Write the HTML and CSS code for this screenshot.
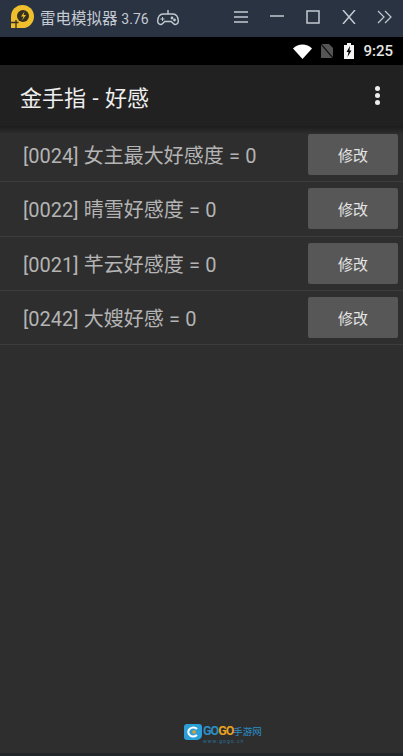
FILE: index.html
```html
<!DOCTYPE html>
<html lang="zh-CN">
<head>
  <meta charset="UTF-8" />
  <meta name="viewport" content="width=device-width, initial-scale=1.0"/>
  <title>金手指 - 好感</title>
  <link rel="stylesheet" href="styles.css">
</head>
<body>

<div class="titlebar">
  <svg class="logo" width="23" height="24" viewBox="0 0 23 24">
    <path d="M0 23V11.500A11.500 11.500 0 1 1 11.500 23z" fill="#f0bf2e"/>
    <circle cx="12" cy="11" r="6" fill="#35301f"/>
    <path d="M13.500 6.500l-3.500 5h2.500l-1.500 4 4-5.500h-2.500z" fill="#f0bf2e"/>
    <path d="M0 17.500h7.500M5 15v9" stroke="#35301f" stroke-width="1.300" fill="none"/>
  </svg>
  <span class="app-name">雷电模拟器 <span class="version">3.76</span></span>
  <svg class="pad" width="22" height="17" viewBox="0 0 22 17" fill="none" stroke="#c4cad2" stroke-width="1.400">
    <path d="M6 5h10c3 0 5 3 5.300 7 .2 3-3 4.500-5 2.500l-2-2H7.700l-2 2c-2 2-5.200.5-5-2.500C1 8 3 5 6 5z"/>
    <path d="M11 5V1"/>
    <path d="M3.500 10h4M5.500 8v4" stroke-width="1"/>
    <circle cx="15" cy="9" r=".7"/><circle cx="17.500" cy="11" r=".7"/>
  </svg>
  <div class="win-btns">
    <svg width="16" height="14" viewBox="0 0 16 14" stroke="#c4cad2" stroke-width="1.500"><path d="M1 2h14M1 7h14M1 12h14"/></svg>
    <svg width="16" height="14" viewBox="0 0 16 14" stroke="#c4cad2" stroke-width="1.500"><path d="M1 6h14"/></svg>
    <svg width="16" height="14" viewBox="0 0 16 14" fill="none" stroke="#c4cad2" stroke-width="1.500"><path d="M2 1h12v12H2z"/></svg>
    <svg width="16" height="14" viewBox="0 0 16 14" stroke="#c4cad2" stroke-width="1.500"><path d="M2 0l12 14M14 0L2 14"/></svg>
    <svg width="16" height="14" viewBox="0 0 16 14" fill="none" stroke="#c4cad2" stroke-width="1.200"><path d="M1 1l6 6-6 6M8 1l6 6-6 6"/></svg>
  </div>
</div>

<div class="statusbar">
  <svg width="19" height="15" viewBox="0 0 19 15"><path d="M0 4.500c5-5.500 14-5.500 19 0l-9.500 10.500z" fill="#fff"/></svg>
  <svg class="nosim" width="12" height="14" viewBox="0 0 12 14"><path d="M0 0h8l4 4v10H0z" fill="#555"/><path d="M0 0l12 14" stroke="#111" stroke-width="1.200"/></svg>
  <svg class="batt" width="10" height="16" viewBox="0 0 10 16"><path d="M3 0h4v2h3v14H0V2h3z" fill="#f4f4f4"/><path d="M6 3L2.500 9h2l-1 5 4-6.500h-2z" fill="#000"/></svg>
  <span class="clock">9:25</span>
</div>

<div class="appbar">
  <h1>金手指 - 好感</h1>
  <div class="menu"><i></i><i></i><i></i></div>
</div>

<div class="list">
  <div class="row"><span class="label">[0024] 女主最大好感度 = 0</span><button class="edit-btn">修改</button></div>
  <div class="row"><span class="label">[0022] 晴雪好感度 = 0</span><button class="edit-btn">修改</button></div>
  <div class="row"><span class="label">[0021] 芊云好感度 = 0</span><button class="edit-btn">修改</button></div>
  <div class="row"><span class="label">[0242] 大嫂好感 = 0</span><button class="edit-btn">修改</button></div>
</div>

<div class="watermark">
  <svg width="18" height="16" viewBox="0 0 18 16">
    <path d="M3 0h12a3 3 0 0 1 3 3v8a5 5 0 0 1-5 5H3a3 3 0 0 1-3-3V3a3 3 0 0 1 3-3z" fill="#2a9fd8"/>
    <path d="M13 5a5 4.500 0 1 0 0 6" fill="none" stroke="#fff" stroke-width="2"/>
    <circle cx="10" cy="8" r="1.800" fill="#e8a020"/>
  </svg>
  <div class="wm-text">
    <div class="wm-name"><span class="go1">GO</span><span class="go2">GO</span><span class="wm-cn">手游网</span></div>
    <div class="wm-url">www.gogo.cn</div>
  </div>
</div>

<div class="bottom-edge"></div>

</body>
</html>
```

FILE: styles.css
```css
* { box-sizing: border-box; }
body {
  margin: 0;
  width: 403px;
  height: 756px;
  overflow: hidden;
  display: flex;
  flex-direction: column;
  background: #2e2e2e;
  font-family: Roboto, "Noto Sans CJK SC", sans-serif;
  color: #bdbdbd;
}
.titlebar {
  height: 37px;
  flex-shrink: 0;
  display: flex;
  align-items: center;
  padding: 0 10px 3px 11px;
  background: #2a3342;
  color: #c4cad2;
}
.logo { margin-right: 6px; flex-shrink: 0; }
.app-name { font-size: 15.500px; white-space: nowrap; }
.version { font-size: 14px; }
.pad { margin-left: 8px; }
.win-btns {
  margin-left: auto;
  display: flex;
  gap: 20px;
}
.statusbar {
  height: 28px;
  flex-shrink: 0;
  display: flex;
  align-items: center;
  justify-content: flex-end;
  padding-right: 10px;
  background: #000;
}
.nosim { margin-left: 9px; }
.batt { margin-left: 11px; }
.clock {
  margin-left: 9px;
  color: #e6e6e6;
  font-size: 15px;
  font-weight: 500;
}
.appbar {
  height: 61px;
  flex-shrink: 0;
  display: flex;
  align-items: center;
  justify-content: space-between;
  padding: 0 23px 0 20px;
  background: #212121;
}
.appbar h1 {
  margin: 0;
  font-size: 22px;
  font-weight: 400;
  word-spacing: 1px;
  color: #eee;
}
.menu { display: flex; flex-direction: column; gap: 2px; }
.menu i {
  width: 5px;
  height: 5px;
  border-radius: 50%;
  background: #eee;
}
.list {
  padding-top: 2px;
  background: linear-gradient(#1c1c1c, #2e2e2e 8px);
}
.row {
  height: 54.250px;
  display: flex;
  align-items: center;
  justify-content: space-between;
  padding: 0 5px 0 23px;
  border-bottom: 1px solid #3c3c3c;
}
.label { font-size: 20px; word-spacing: 0.300px; color: #b4b4b4; white-space: nowrap; }
.edit-btn {
  width: 90px;
  height: 41px;
  border: none;
  border-radius: 2px;
  background: #575757;
  color: #e4e4e4;
  font-family: inherit;
  font-size: 15px;
}
.watermark {
  margin-top: auto;
  margin-bottom: 9px;
  margin-left: 184px;
  align-self: flex-start;
  display: flex;
  align-items: flex-start;
  gap: 1px;
}
.wm-text { padding-top: 2px; }
.wm-name {
  height: 10px;
  font-size: 12.500px;
  line-height: 10px;
  font-weight: 700;
  letter-spacing: -1px;
  white-space: nowrap;
}
.wm-cn {
  font-size: 9.500px;
  font-weight: 400;
  letter-spacing: 0;
  color: #2a8fc8;
}
.wm-url {
  margin-top: 3px;
  font-size: 5px;
  line-height: 5px;
  color: #2a6f9a;
  letter-spacing: 1px;
}
.go1 { color: #2a8fc8; }
.go2 { color: #e8a020; }
.bottom-edge {
  height: 3px;
  flex-shrink: 0;
  background: #1f2529;
}
```
